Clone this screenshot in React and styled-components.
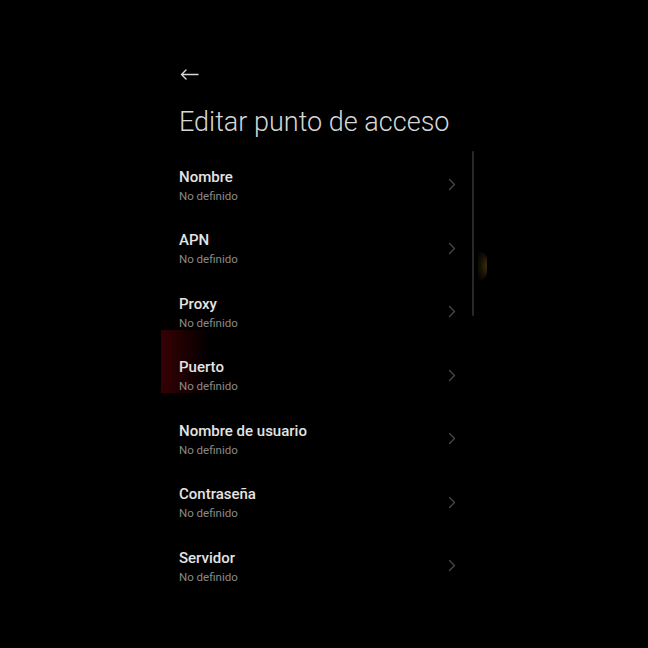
import React from 'react';
import styled, { createGlobalStyle } from 'styled-components';

const GlobalStyle = createGlobalStyle`
  html, body {
    margin: 0;
    padding: 0;
    background: #000;
  }
  body {
    font-family: Roboto, "Noto Sans", "Liberation Sans", sans-serif;
    color: #eee;
  }
`;

const fields = [
  'Nombre',
  'APN',
  'Proxy',
  'Puerto',
  'Nombre de usuario',
  'Contraseña',
  'Servidor',
];

export default function App() {
  return (
    <>
      <GlobalStyle />
      <Page>
        <Screen>
          <RedGlow />
          <AmberGlow />
          <Header>
            <BackButton aria-label="Atrás">
              <svg width="19" height="11" viewBox="0 0 19 11" fill="none">
                <path d="M18 5.5H1.5M6 1L1.5 5.5L6 10" stroke="#d8d8d8" strokeWidth="1.4" strokeLinecap="round" strokeLinejoin="round" />
              </svg>
            </BackButton>
            <Title>Editar punto de acceso</Title>
          </Header>
          <List>
            {fields.map((label) => (
              <Row key={label}>
                <Texts>
                  <Label>{label}</Label>
                  <Value>No definido</Value>
                </Texts>
                <svg width="8" height="13" viewBox="0 0 8 13" fill="none">
                  <path d="M1.5 1.5L6.5 6.5L1.5 11.5" stroke="#474747" strokeWidth="1.4" strokeLinecap="round" strokeLinejoin="round" />
                </svg>
              </Row>
            ))}
            <ScrollBar />
          </List>
        </Screen>
      </Page>
    </>
  );
}

const Page = styled.div`
  width: 648px;
  height: 648px;
  background: #000;
  overflow: hidden;
`;

const Screen = styled.div`
  position: relative;
  margin-left: 161px;
  width: 330px;
  height: 648px;
  padding: 0 0 0 18px;
  box-sizing: border-box;
`;

const Header = styled.div`
  position: relative;
  display: flex;
  flex-direction: column;
  padding-top: 65px;
`;

const BackButton = styled.div`
  display: flex;
  align-items: center;
  height: 19px;
  width: 20px;
  margin-left: 1px;
`;

const Title = styled.h1`
  margin: 20px 0 0;
  font-size: 27px;
  line-height: 36px;
  font-weight: 300;
  color: #d6d6d6;
  letter-spacing: 0;
`;

const List = styled.div`
  position: relative;
  margin-top: 14px;
  display: flex;
  flex-direction: column;
`;

const Row = styled.div`
  height: 63.5px;
  display: flex;
  align-items: center;
  justify-content: space-between;
  padding-right: 35px;
  svg {
    margin-top: -2px;
  }
`;

const Texts = styled.div`
  display: flex;
  flex-direction: column;
  gap: 3px;
`;

const Label = styled.div`
  font-size: 15px;
  line-height: 18px;
  font-weight: 500;
  color: #e4e4e4;
`;

const Value = styled.div`
  font-size: 11.5px;
  line-height: 15px;
  color: #8a8a8a;
`;

const ScrollBar = styled.div`
  position: absolute;
  left: 293px;
  top: -3px;
  width: 2px;
  height: 165px;
  border-radius: 1px;
  background: #282828;
`;

const RedGlow = styled.div`
  position: absolute;
  left: 0;
  top: 330px;
  width: 50px;
  height: 63px;
  background: linear-gradient(90deg, rgba(60, 0, 5, 0.9) 0%, rgba(40, 0, 3, 0.75) 45%, rgba(0, 0, 0, 0) 100%);
  pointer-events: none;
`;

const AmberGlow = styled.div`
  position: absolute;
  left: 317px;
  top: 251px;
  width: 9px;
  height: 30px;
  border-radius: 0 15px 15px 0 / 0 15px 15px 0;
  background: radial-gradient(ellipse at 100% 50%, rgba(95, 70, 22, 0.65) 0%, rgba(60, 42, 12, 0.4) 50%, rgba(0, 0, 0, 0) 100%);
  pointer-events: none;
`;
